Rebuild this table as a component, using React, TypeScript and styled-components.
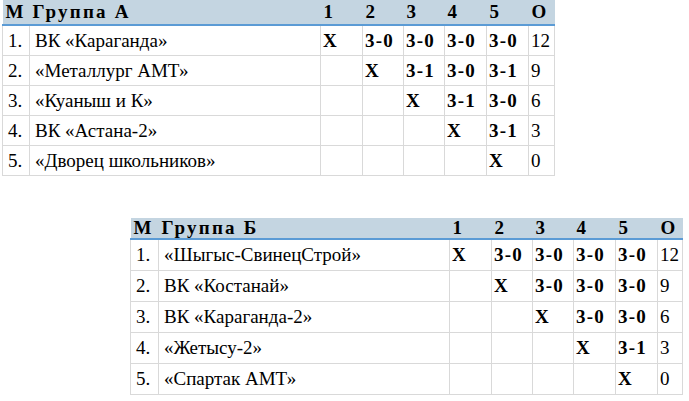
import styled, { createGlobalStyle } from "styled-components";

const serif = `"Liberation Serif", "Times New Roman", serif`;

const GlobalStyle = createGlobalStyle`
  html, body {
    margin: 0;
    padding: 0;
    background: #ffffff;
  }
  body {
    font-family: ${serif};
    color: #000;
  }
`;

type Group = {
  title: string;
  teams: { name: string; results: string[]; points: string }[];
};

const groupA: Group = {
  title: "Группа А",
  teams: [
    { name: "ВК «Караганда»", results: ["X", "3-0", "3-0", "3-0", "3-0"], points: "12" },
    { name: "«Металлург АМТ»", results: ["", "X", "3-1", "3-0", "3-1"], points: "9" },
    { name: "«Куаныш и К»", results: ["", "", "X", "3-1", "3-0"], points: "6" },
    { name: "ВК «Астана-2»", results: ["", "", "", "X", "3-1"], points: "3" },
    { name: "«Дворец школьников»", results: ["", "", "", "", "X"], points: "0" },
  ],
};

const groupB: Group = {
  title: "Группа Б",
  teams: [
    { name: "«Шыгыс-СвинецСтрой»", results: ["X", "3-0", "3-0", "3-0", "3-0"], points: "12" },
    { name: "ВК «Костанай»", results: ["", "X", "3-0", "3-0", "3-0"], points: "9" },
    { name: "ВК «Караганда-2»", results: ["", "", "X", "3-0", "3-0"], points: "6" },
    { name: "«Жетысу-2»", results: ["", "", "", "X", "3-1"], points: "3" },
    { name: "«Спартак АМТ»", results: ["", "", "", "", "X"], points: "0" },
  ],
};

const Page = styled.div`
  display: flex;
  flex-direction: column;
  align-items: flex-start;
  gap: 42px;
  padding: 0 0 0 2px;
`;

const Table = styled.table<{ $offset: number; $headH: number; $rowH: number }>`
  margin-left: ${(p) => p.$offset}px;
  border-collapse: collapse;
  table-layout: fixed;
  font-family: ${serif};
  font-size: 19px;
  line-height: 20px;
  color: #000;

  thead th {
    height: ${(p) => p.$headH}px;
  }
  tbody td {
    height: ${(p) => p.$rowH - 1}px;
  }
`;

const HeadRow = styled.tr`
  background: #c4d5e1;
  border-bottom: 2px solid #5b9bd5;
`;

const Th = styled.th`
  padding: 0 0 0 3px;
  text-align: left;
  font-weight: bold;
  vertical-align: middle;
  white-space: nowrap;
  overflow: hidden;
`;

const TitleTh = styled(Th)`
  letter-spacing: 2.2px;
`;

const Td = styled.td<{ $bold?: boolean }>`
  padding: 0 0 0 3px;
  border: 1px solid #d9d9d9;
  font-weight: ${(p) => (p.$bold ? "bold" : "normal")};
  vertical-align: middle;
  white-space: nowrap;
  overflow: hidden;
`;

const NameTd = styled(Td)`
  padding-left: 5px;
`;

const NumTd = styled(Td)`
  padding-left: 5px;
`;

const ScoreTd = styled(Td)`
  padding-left: 2px;
  letter-spacing: ${(p) => (p.$bold ? "1.2px" : "0")};
`;

type TableProps = {
  group: Group;
  offset: number;
  cols: number[];
  headH: number;
  rowH: number;
};

const GroupTable = ({ group, offset, cols, headH, rowH }: TableProps) => (
  <Table $offset={offset} $headH={headH} $rowH={rowH} style={{ width: cols.reduce((a, b) => a + b, 0) }}>
    <colgroup>
      {cols.map((w, i) => (
        <col key={i} style={{ width: w }} />
      ))}
    </colgroup>
    <thead>
      <HeadRow>
        <Th>М</Th>
        <TitleTh>{group.title}</TitleTh>
        {["1", "2", "3", "4", "5", "О"].map((h) => (
          <Th key={h}>{h}</Th>
        ))}
      </HeadRow>
    </thead>
    <tbody>
      {group.teams.map((t, i) => (
        <tr key={t.name}>
          <NumTd>{i + 1}.</NumTd>
          <NameTd>{t.name}</NameTd>
          {t.results.map((r, j) => (
            <ScoreTd key={j} $bold>
              {r}
            </ScoreTd>
          ))}
          <ScoreTd>{t.points}</ScoreTd>
        </tr>
      ))}
    </tbody>
  </Table>
);

export default function App() {
  return (
    <>
      <GlobalStyle />
      <Page>
        <GroupTable
          group={groupA}
          offset={0}
          cols={[27, 291, 42, 41, 41, 42, 42, 26]}
          headH={24}
          rowH={30}
        />
        <GroupTable
          group={groupB}
          offset={128}
          cols={[28, 291, 42, 41, 41, 42, 42, 25]}
          headH={20}
          rowH={31}
        />
      </Page>
    </>
  );
}
